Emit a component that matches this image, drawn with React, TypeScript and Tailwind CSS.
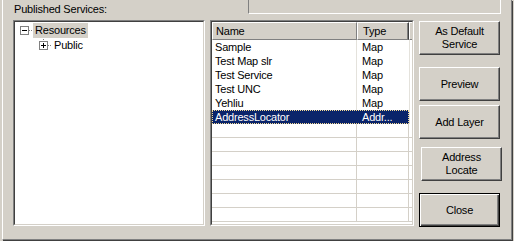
import React from 'react';

type Service = { name: string; type: string; selected?: boolean };

const services: Service[] = [
  { name: 'Sample', type: 'Map' },
  { name: 'Test Map slr', type: 'Map' },
  { name: 'Test Service', type: 'Map' },
  { name: 'Test UNC', type: 'Map' },
  { name: 'Yehliu', type: 'Map' },
  { name: 'AddressLocator', type: 'Addr...', selected: true },
];

const EMPTY_ROWS = 7;

function Dots({ x1, x2, y }: { x1: number; x2: number; y: number }) {
  const out = [];
  for (let x = x1; x <= x2; x += 2) out.push(<rect key={x} x={x} y={y} width={1} height={1} fill="#808080" />);
  return <>{out}</>;
}

function VDots({ x, y1, y2 }: { x: number; y1: number; y2: number }) {
  const out = [];
  for (let y = y1; y <= y2; y += 2) out.push(<rect key={y} x={x} y={y} width={1} height={1} fill="#808080" />);
  return <>{out}</>;
}

function Expander({ x, open }: { x: number; open: boolean }) {
  return (
    <>
      <rect x={x + 0.5} y={3.5} width={8} height={8} fill="#fff" stroke="#808080" />
      <rect x={x + 2} y={7} width={5} height={1} fill="#000" />
      {!open && <rect x={x + 4} y={5} width={1} height={5} fill="#000" />}
    </>
  );
}

function Button({ children, className = '', isDefault = false }: { children: React.ReactNode; className?: string; isDefault?: boolean }) {
  return (
    <div
      className={
        'flex h-[34px] w-[81px] items-center justify-center text-center leading-[13px] text-black bg-[#d4d0c8] ' +
        (isDefault
          ? 'border border-black shadow-[inset_1px_1px_0_#fff,inset_-1px_-1px_0_#404040,inset_-2px_-2px_0_#808080] '
          : 'border border-t-white border-l-white border-r-[#404040] border-b-[#404040] shadow-[inset_-1px_-1px_0_#808080] ') +
        className
      }
    >
      {children}
    </div>
  );
}

export default function App() {
  return (
    <div className="h-[241px] w-[514px] overflow-hidden bg-[#d4d0c8] text-[11px] tracking-[-0.2px] text-black [font-family:'Liberation_Sans',Arial,sans-serif]">
      <div className="ml-[2px] h-[240px] w-[510px] border-l border-r border-b border-l-white border-r-[#808080] border-b-[#808080] shadow-[1px_1px_0_#404040]">
        {/* top strip */}
        <div className="flex h-[20px]">
          <div className="w-[245px] pl-[11px] pt-[3px] leading-[13px]">Published Services:</div>
          <div className="h-[14px] w-[253px] border-l border-r border-b border-l-[#808080] border-r-white border-b-white" />
        </div>

        <div className="flex items-start pl-[10px]">
          {/* tree */}
          <div className="h-[206px] w-[192px] border border-t-[#808080] border-l-[#808080] border-r-white border-b-white">
            <div className="h-full w-full border border-t-[#404040] border-l-[#404040] border-r-[#d4d0c8] border-b-[#d4d0c8] bg-white pt-[1px]">
              <div className="flex h-[15px] items-center">
                <svg width="18" height="15" className="shrink-0">
                  <Expander x={5} open />
                  <Dots x1={14} x2={17} y={7} />
                </svg>
                <span className="bg-[#d4d0c8] px-[2px] leading-[15px]">Resources</span>
              </div>
              <div className="flex h-[15px] items-center">
                <svg width="37" height="15" className="shrink-0">
                  <VDots x={28} y1={-1} y2={2} />
                  <Expander x={24} open={false} />
                  <Dots x1={33} x2={36} y={7} />
                </svg>
                <span className="px-[2px] leading-[15px]">Public</span>
              </div>
            </div>
          </div>

          {/* list view */}
          <div className="ml-[5px] h-[206px] w-[204px] border border-t-[#808080] border-l-[#808080] border-r-white border-b-white">
            <div className="h-full w-full border border-t-[#404040] border-l-[#404040] border-r-[#d4d0c8] border-b-[#d4d0c8] bg-white">
              <div className="flex h-[18px]">
                <div className="flex w-[145px] items-center border border-t-white border-l-white border-r-[#808080] border-b-[#808080] bg-[#d4d0c8] pl-[3px]">Name</div>
                <div className="flex w-[52px] items-center border border-t-white border-l-white border-r-[#404040] border-b-[#808080] bg-[#d4d0c8] pl-[5px] shadow-[inset_-1px_0_0_#808080]">Type</div>
                <div className="flex-1 border-t border-l border-b border-t-white border-l-white border-b-[#808080] bg-[#d4d0c8]" />
              </div>
              {services.map(s => (
                <div key={s.name} className="flex h-[14px] leading-[14px]">
                  <div
                    className={
                      'flex w-[197px] ' +
                      (s.selected ? 'bg-[#0a246a] text-white outline outline-1 outline-dotted outline-[#f5db95] -outline-offset-1' : '')
                    }
                  >
                    <div className={'w-[145px] pl-[3px] ' + (s.selected ? '' : 'border-r border-r-[#e4e2dc]')}>{s.name}</div>
                    <div className="w-[52px] pl-[5px]">{s.type}</div>
                  </div>
                  <div className="w-px border-l border-l-[#e4e2dc]" />
                </div>
              ))}
              {Array.from({ length: EMPTY_ROWS }).map((_, i) => (
                <div key={i} className="flex h-[14px] border-b border-b-[#d4d0c8]">
                  <div className="w-[145px] border-r border-r-[#d4d0c8]" />
                  <div className="w-[52px] border-r border-r-[#d4d0c8]" />
                </div>
              ))}
            </div>
          </div>

          {/* buttons */}
          <div className="ml-[5px] flex w-[83px] flex-col pt-[1px]">
            <Button>
              As Default
              <br />
              Service
            </Button>
            <Button className="mt-[12px]">Preview</Button>
            <Button className="mt-[4px]">Add Layer</Button>
            <Button className="ml-[2px] mt-[8px]">
              Address
              <br />
              Locate
            </Button>
            <Button className="mt-[12px]" isDefault>
              Close
            </Button>
          </div>
        </div>
      </div>
    </div>
  );
}
